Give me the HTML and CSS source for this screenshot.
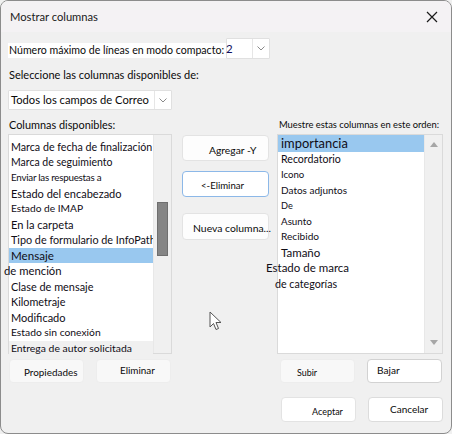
FILE: index.html
```html
<!DOCTYPE html>
<html lang="es">
<head>
<meta charset="utf-8">
<title>Mostrar columnas</title>
<link rel="stylesheet" href="styles.css">
</head>
<body>
<div class="window">
  <div class="titlebar">
    <span class="title">Mostrar columnas</span>
    <svg class="close" width="12" height="12" viewBox="0 0 12 12"><path d="M1 1 L11 11 M11 1 L1 11" stroke="#1a1a1a" stroke-width="1.2" fill="none"/></svg>
  </div>
  <div class="content">
    <div class="compact-row">
      <span class="compact-label">Número máximo de líneas en modo compacto:</span>
      <div class="combo combo-small">
        <span class="combo-text small-val">2</span>
        <span class="combo-btn"><svg width="8" height="5" viewBox="0 0 8 5"><path d="M0.5 0.5 L4 4 L7.5 0.5" stroke="#8a8a8a" fill="none"/></svg></span>
      </div>
    </div>
    <div class="select-label">Seleccione las columnas disponibles de:</div>
    <div class="combo combo-wide">
      <span class="combo-text">Todos los campos de Correo</span>
      <span class="combo-btn"><svg width="8" height="5" viewBox="0 0 8 5"><path d="M0.5 0.5 L4 4 L7.5 0.5" stroke="#8a8a8a" fill="none"/></svg></span>
    </div>

    <div class="main">
      <div class="col-left">
        <div class="col-label">Columnas disponibles:</div>
        <div class="listbox">
          <ul class="items left-items">
            <li class="s107">Marca de fecha de finalización</li>
            <li class="s105">Marca de seguimiento</li>
            <li class="s98 tight">Enviar las respuestas a</li>
            <li class="s110">Estado del encabezado</li>
            <li class="s102">Estado de IMAP</li>
            <li class="s111">En la carpeta</li>
            <li class="s108">Tipo de formulario de InfoPath</li>
            <li class="s112 selected">Mensaje</li>
            <li class="s113 out-left">de mención</li>
            <li class="s109">Clase de mensaje</li>
            <li class="s108">Kilometraje</li>
            <li class="s110">Modificado</li>
            <li class="s103">Estado sin conexión</li>
            <li class="s104 grayrow">Entrega de autor solicitada</li>
          </ul>
          <div class="vscroll">
            <div class="thumb"></div>
          </div>
        </div>
      </div>

      <div class="col-mid">
        <button class="btn btn-add">Agregar -Y</button>
        <button class="btn btn-remove">&lt;-Eliminar</button>
        <button class="btn btn-new">Nueva columna...</button>
      </div>

      <div class="col-right">
        <div class="col-label small-label">Muestre estas columnas en este orden:</div>
        <div class="listbox">
          <ul class="items right-items">
            <li class="s129 selected first">importancia</li>
            <li class="s106">Recordatorio</li>
            <li class="s96">Icono</li>
            <li class="s100">Datos adjuntos</li>
            <li class="s92">De</li>
            <li class="s98">Asunto</li>
            <li class="s101">Recibido</li>
            <li class="s115">Tamaño</li>
            <li class="s115 out-far">Estado de marca</li>
            <li class="s107 out-near">de categorías</li>
          </ul>
          <div class="vscroll arrows">
            <svg width="8" height="5" viewBox="0 0 8 5"><path d="M0 5 L4 0 L8 5 Z" fill="#a6a6a6"/></svg>
            <svg width="8" height="5" viewBox="0 0 8 5"><path d="M0 0 L4 5 L8 0 Z" fill="#a6a6a6"/></svg>
          </div>
        </div>
      </div>
    </div>

    <div class="btn-row">
      <button class="btn bottom soft b-props">Propiedades</button>
      <button class="btn bottom soft b-del">Eliminar</button>
      <button class="btn bottom soft b-up">Subir</button>
      <button class="btn bottom b-down">Bajar</button>
    </div>
    <div class="btn-row end">
      <button class="btn bottom b-ok">Aceptar</button>
      <button class="btn bottom b-cancel">Cancelar</button>
    </div>
  </div>

  <svg class="cursor" width="14" height="21" viewBox="0 0 14 21">
    <path d="M1 1 L1 16 L4.5 12.5 L7 18.5 L9.5 17.5 L7 11.5 L12 11.5 Z" fill="#ffffff" stroke="#555" stroke-width="1" stroke-linejoin="round"/>
  </svg>
</div>
</body>
</html>
```

FILE: styles.css
```css
* { box-sizing: border-box; }
html, body { margin: 0; padding: 0; background: #f0f0f0; }
body { width: 452px; height: 434px; overflow: hidden; font-family: Lato, "Noto Sans", sans-serif; color: #0a0a0a; }

.window {
  position: relative;
  width: 452px;
  height: 434px;
  border: 1px solid #8c8c8c;
  border-radius: 8px;
  background: #f0f0f0;
  overflow: hidden;
}

.titlebar {
  height: 31px;
  background: #f4f2f4;
  display: flex;
  align-items: center;
  justify-content: space-between;
  padding: 0 13px 0 9px;
}
.title { font-size: 11.2px; color: #1a1a1a; }
.close { display: block; margin-top: 1px; }

.content { padding: 0 8px 0 7px; }

.compact-row { display: flex; margin-top: 6px; height: 21px; }
.compact-label {
  background: #fff;
  height: 15px;
  margin-top: 5px;
  width: 218px;
  padding-left: 1px;
  font-size: 10.6px;
  line-height: 15px;
  white-space: nowrap;
  overflow: hidden;
}

.combo {
  display: flex;
  background: #fff;
  border: 1px solid #e0e0e0;
  border-radius: 1px;
}
.combo-small { width: 44px; height: 21px; margin-left: 0; }
.combo-wide { width: 164px; height: 20px; margin-top: 6px; }
.combo-text { flex: 1; min-width: 0; overflow: hidden; font-size: 11.2px; line-height: 18px; padding-left: 2px; white-space: nowrap; }
.small-val { font-size: 11.5px; padding-left: 0; margin-left: -1px; line-height: 19px; color: #101060; overflow: visible; }
.combo-btn {
  flex: none;
  width: 17px;
  border-left: 1px solid #e6e6e6;
  display: flex;
  align-items: center;
  justify-content: center;
}

.select-label { margin-top: 7px; font-size: 11px; line-height: 18px; padding-left: 1px; }

.main { display: flex; margin-top: 6px; }
.col-left { width: 164px; }
.col-mid { width: 87px; margin-left: 10px; display: flex; flex-direction: column; padding-top: 19px; }
.col-right { width: 166px; margin-left: 8px; }

.col-label { font-size: 10.9px; line-height: 18px; white-space: nowrap; padding-left: 1px; }
.small-label { font-size: 9.4px; padding-left: 2px; }

.listbox {
  position: relative;
  height: 220px;
  background: #fff;
  border: 1px solid #dadada;
  display: flex;
}
.items {
  list-style: none;
  margin: 0;
  padding: 0;
  flex: 1;
  min-width: 0;
}
.items li { white-space: nowrap; height: 15.5px; line-height: 15.5px; padding-left: 2px; color: #100d16; }
.left-items { padding-top: 4px; }
.right-items { padding-top: 0; }
.right-items li { padding-left: 3px; }
.right-items li.first { height: 16.5px; line-height: 16.5px; }
.items li.selected { background: #99c8ef; }
.items li.grayrow { background: #f0f0f0; }
.items li.out-left { margin-left: -5px; padding-left: 0; }
.items li.out-far { margin-left: -12px; padding-left: 0; }
.items li.out-near { margin-left: -3px; padding-left: 0; }
.items li.tight { letter-spacing: -0.25px; }

.s92 { font-size: 9.2px; }
.s96 { font-size: 9.6px; }
.s98 { font-size: 9.8px; }
.s100 { font-size: 10px; }
.s101 { font-size: 10.1px; }
.s102 { font-size: 10.2px; }
.s103 { font-size: 10.3px; }
.s104 { font-size: 10.4px; }
.s105 { font-size: 10.5px; }
.s106 { font-size: 10.6px; }
.s107 { font-size: 10.7px; }
.s108 { font-size: 10.8px; }
.s109 { font-size: 10.9px; }
.s110 { font-size: 11px; }
.s111 { font-size: 11.1px; }
.s112 { font-size: 11.6px; }
.s113 { font-size: 11.3px; }
.s115 { font-size: 11.5px; }
.s129 { font-size: 12.9px; }

.vscroll {
  width: 18px;
  flex: none;
  background: #f0f0f0;
  border-left: 1px solid #e8e8e8;
  padding-top: 67px;
  display: flex;
  justify-content: center;
}
.thumb { width: 11px; height: 54px; background: #858585; border: 1px solid #6f6f6f; }
.vscroll.arrows {
  padding: 7px 0 8px;
  flex-direction: column;
  align-items: center;
  justify-content: space-between;
}
.vscroll.arrows svg { display: block; }

.btn {
  font-family: Lato, "Noto Sans", sans-serif;
  font-size: 10px;
  color: #0a0a0a;
  background: #fdfdfd;
  border: 1px solid #e3e3e3;
  border-radius: 4px;
  text-align: left;
  white-space: nowrap;
  padding: 0;
  margin: 0;
}
.col-mid .btn { width: 87px; padding-top: 3px; }
.btn-add { height: 26px; padding-left: 26px; font-size: 10.3px; }
.btn-remove { height: 26px; margin-top: 10px; padding-left: 18px; border-color: #8cb8e8; background: #fff; font-size: 9.6px; }
.btn-new { height: 27px; margin-top: 16px; padding-left: 10px; overflow: visible; font-size: 10.4px; }

.btn-row { display: flex; margin-top: 5px; height: 24px; }
.btn-row.end { justify-content: flex-end; margin-top: 14px; height: 25px; }
.bottom { width: 75px; height: 100%; }
.soft { background: #f8f8f8; border-color: #ededed; }
.b-props { margin-left: 1px; padding-left: 14px; font-size: 9.9px; padding-top: 1px; }
.b-del { margin-left: 12px; padding-left: 23px; padding-bottom: 2px; font-size: 9.9px; }
.b-up { margin-left: 109px; padding-left: 16px; font-size: 8.9px; padding-top: 3px; }
.b-down { margin-left: 12px; padding-left: 9px; background: #fff; border-color: #d2d2d2; padding-bottom: 2px; font-size: 10.1px; }
.b-ok { padding-left: 30px; font-size: 9px; padding-top: 4px; background: #fff; }
.b-cancel { margin-left: 12px; padding-left: 21px; background: #fff; border-color: #dcdcdc; padding-bottom: 1px; font-size: 10px; }

.cursor { position: absolute; left: 208px; top: 310px; }
```
